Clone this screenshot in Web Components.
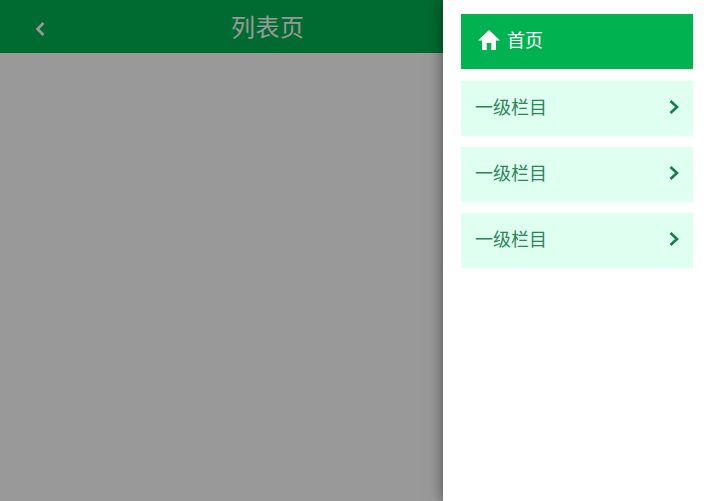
<!DOCTYPE html>
<html lang="zh">
<head>
<meta charset="utf-8">
<title>列表页</title>
<style>
    html, body {
        margin: 0;
        height: 100%;
        font-family: "Noto Sans CJK SC", "Liberation Sans", sans-serif;
    }
</style>
</head>
<body>
<list-page>
    <page-header slot="main" title="列表页"></page-header>
    <side-menu slot="side">
        <menu-item home>首页</menu-item>
        <menu-item>一级栏目</menu-item>
        <menu-item>一级栏目</menu-item>
        <menu-item>一级栏目</menu-item>
    </side-menu>
</list-page>

<script>
const listPageTemplate = document.createElement("template");
listPageTemplate.innerHTML = `
    <style>
        :host {
            display: flex;
            height: 100vh;
            min-height: 501px;
            overflow: hidden;
            background: #fff;
        }
        .main {
            position: relative;
            flex: 1;
            min-width: 0;
        }
        .mask {
            position: absolute;
            inset: 0;
            background: rgba(0, 0, 0, 0.4);
        }
        .side {
            position: relative;
            width: 267px;
            flex: none;
            background: #fff;
            box-shadow: 0 0 14px rgba(0, 0, 0, 0.5);
        }
    </style>
    <div class="main">
        <slot name="main"></slot>
        <div class="mask"></div>
    </div>
    <div class="side"><slot name="side"></slot></div>
`;

class ListPage extends HTMLElement {
    connectedCallback() {
        const shadowRoot = this.attachShadow({mode: "open"});
        shadowRoot.appendChild(listPageTemplate.content.cloneNode(true));
    }
}

class PageHeader extends HTMLElement {
    connectedCallback() {
        const shadowRoot = this.attachShadow({mode: "open"});
        shadowRoot.innerHTML = `
            <style>
                :host {
                    display: flex;
                    align-items: center;
                    height: 53px;
                    background: #00b350;
                    color: #fff;
                }
                svg {
                    flex: none;
                    width: 12px;
                    height: 16px;
                    margin-left: 34px;
                    margin-top: 4px;
                }
                h1 {
                    margin: 0 0 1px 185px;
                    font-size: 24px;
                    font-weight: 400;
                    line-height: 50px;
                    letter-spacing: 0.5px;
                }
            </style>
            <svg viewBox="0 0 12 16" fill="none" stroke="#fff" stroke-width="2.6">
                <path d="M9.5 2 L3.5 8 L9.5 14"/>
            </svg>
            <h1>${this.getAttribute("title")}</h1>
        `;
    }
}

class SideMenu extends HTMLElement {
    connectedCallback() {
        const shadowRoot = this.attachShadow({mode: "open"});
        shadowRoot.innerHTML = `
            <style>
                :host {
                    display: flex;
                    flex-direction: column;
                    gap: 11px;
                    padding: 14px 17px 0 18px;
                }
            </style>
            <slot></slot>
        `;
    }
}

class MenuItem extends HTMLElement {
    connectedCallback() {
        const home = this.hasAttribute("home");
        const shadowRoot = this.attachShadow({mode: "open"});
        shadowRoot.innerHTML = `
            <style>
                :host {
                    display: flex;
                    align-items: center;
                    height: 55px;
                    padding: 0 14px;
                    font-size: 18px;
                    background: #dffff0;
                    color: #2a8558;
                }
                :host([home]) {
                    margin-bottom: 1px;
                    padding-left: 17px;
                    background: #00b350;
                    color: #fff;
                }
                .text {
                    flex: 1;
                    margin-bottom: 5px;
                }
                .home {
                    width: 22px;
                    height: 20px;
                    margin-right: 7px;
                    margin-bottom: 3px;
                }
                .arrow {
                    width: 12px;
                    height: 16px;
                    margin-right: -1px;
                    margin-bottom: 4px;
                }
            </style>
            ${home ? `<svg class="home" viewBox="0 0 22 20" fill="#fff">
                <path d="M11 0 L22 10.5 L18 10.5 L18 20 L13.3 20 L13.3 13 L8.7 13 L8.7 20 L4 20 L4 10.5 L0 10.5 Z"/>
            </svg>` : ""}
            <span class="text"><slot></slot></span>
            ${home ? "" : `<svg class="arrow" viewBox="0 0 12 16" fill="none" stroke="#0f7f4c" stroke-width="2.6">
                <path d="M2.5 2 L9 8 L2.5 14"/>
            </svg>`}
        `;
    }
}

customElements.define("list-page", ListPage);
customElements.define("page-header", PageHeader);
customElements.define("side-menu", SideMenu);
customElements.define("menu-item", MenuItem);
</script>
</body>
</html>
